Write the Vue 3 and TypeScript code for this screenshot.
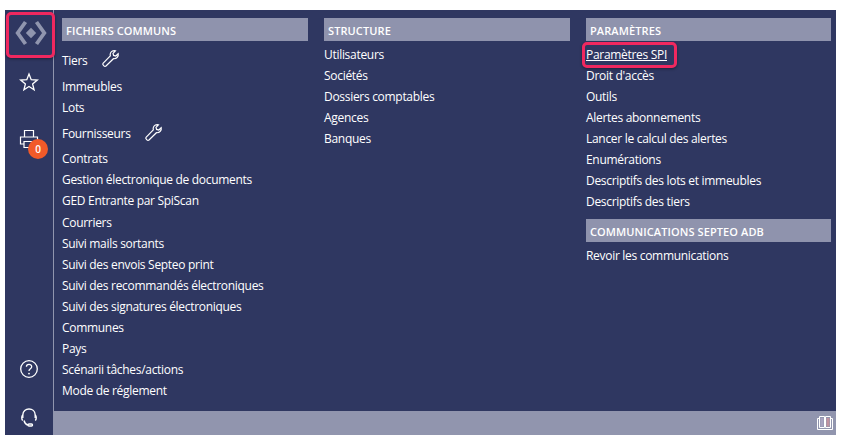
<script setup lang="ts">
interface Item { label: string; tool?: boolean; boxed?: boolean }
interface Section { title: string; items: Item[] }
const col1: Section[] = [{ title: 'FICHIERS COMMUNS', items: [
  { label: 'Tiers', tool: true }, { label: 'Immeubles' }, { label: 'Lots' }, { label: 'Fournisseurs', tool: true },
  { label: 'Contrats' }, { label: 'Gestion électronique de documents' }, { label: 'GED Entrante par SpiScan' },
  { label: 'Courriers' }, { label: 'Suivi mails sortants' }, { label: 'Suivi des envois Septeo print' },
  { label: 'Suivi des recommandés électroniques' }, { label: 'Suivi des signatures électroniques' },
  { label: 'Communes' }, { label: 'Pays' }, { label: 'Scénarii tâches/actions' }, { label: 'Mode de réglement' }
] }]
const col2: Section[] = [{ title: 'STRUCTURE', items: [
  { label: 'Utilisateurs' }, { label: 'Sociétés' }, { label: 'Dossiers comptables' }, { label: 'Agences' }, { label: 'Banques' }
] }]
const col3: Section[] = [
  { title: 'PARAMÈTRES', items: [
    { label: 'Paramètres SPI', boxed: true }, { label: "Droit d'accès" }, { label: 'Outils' }, { label: 'Alertes abonnements' },
    { label: 'Lancer le calcul des alertes' }, { label: 'Enumérations' }, { label: 'Descriptifs des lots et immeubles' }, { label: 'Descriptifs des tiers' }
  ] },
  { title: 'COMMUNICATIONS SEPTEO ADB', items: [{ label: 'Revoir les communications' }] }
]
const columns = [col1, col2, col3]
</script>

<template>
  <div class="page">
    <div class="app">
      <aside class="rail">
        <div class="logo">
          <svg width="32" height="32" viewBox="0 0 32 32" fill="none">
            <path d="M10.5 5 L2.7 16 L10.5 27 M21.5 5 L29.3 16 L21.5 27" stroke="#9095ae" stroke-width="3.8" />
            <path d="M16 10.8 L21.2 16 L16 21.2 L10.8 16 Z" fill="#9095ae" />
          </svg>
        </div>
        <div class="star">
          <svg width="20" height="20" viewBox="0 0 20 20" fill="none" stroke="#fff" stroke-width="1.3">
            <path d="M10 2 L12.2 7.7 L18.3 8 L13.6 11.9 L15.1 17.8 L10 14.5 L4.9 17.8 L6.4 11.9 L1.7 8 L7.8 7.7 Z" />
          </svg>
        </div>
        <div class="printer">
          <svg width="20" height="20" viewBox="0 0 20 20" fill="none" stroke="#fff" stroke-width="1.2">
            <path d="M5.5 8 V1.5 H14.5 V8 M5.5 15 H1.5 V8 H18.5 V15 H15 M5 12.5 H13 V18.5 H5 Z" />
          </svg>
          <span class="badge">0</span>
        </div>
        <div class="spacer"></div>
        <div class="help">
          <svg width="20" height="20" viewBox="0 0 20 20" fill="none" stroke="#fff" stroke-width="1.3">
            <circle cx="10" cy="10" r="8.3" />
            <path d="M7.4 7.8 C7.4 4.6 12.7 4.6 12.7 7.8 C12.7 9.8 10 9.8 10 12" />
            <circle cx="10" cy="14.6" r=".9" fill="#fff" stroke="none" />
          </svg>
        </div>
        <div class="headset">
          <svg width="20" height="22" viewBox="0 0 20 22" fill="none" stroke="#fff" stroke-width="1.4">
            <path d="M3.8 12 V9 C3.8 1 16.2 1 16.2 9 V12" />
            <path d="M3.8 9 C2.4 10 2.4 13.5 3.8 14.5 M16.2 9 C17.6 10 17.6 13.5 16.2 14.5" />
            <path d="M5 14.5 C5.5 17 7 18.5 9 19" />
            <rect x="9" y="18" width="4.5" height="2" rx="1" />
          </svg>
        </div>
      </aside>
      <div class="main">
        <div class="cols">
          <div v-for="(col, i) in columns" :key="i" class="col">
            <section v-for="sec in col" :key="sec.title" class="sec">
              <h2 class="head">{{ sec.title }}</h2>
              <ul class="list">
                <li v-for="it in sec.items" :key="it.label" class="row" :class="{ tall: it.tool }">
                  <span :class="{ link: it.boxed }">{{ it.label }}</span>
                  <svg v-if="it.tool" class="wrench" width="19" height="19" viewBox="0 0 19 19" fill="none" stroke="#fff" stroke-width="1.2">
                    <path d="M2 14.3 L9.3 6.8 C8.6 4.3 10.3 1.6 13.3 1.6 L14.4 1.8 L12 4.4 L12.6 6.4 L14.8 7 L17.2 4.7 C17.8 7.6 15.6 10 12.4 9.7 L5 17 C3.6 18 1.1 15.9 2 14.3 Z" />
                  </svg>
                  <span v-if="it.boxed" class="box"></span>
                </li>
              </ul>
            </section>
          </div>
        </div>
        <footer class="foot">
          <svg width="16" height="14" viewBox="0 0 16 14" fill="none" stroke="#fff" stroke-width="1">
            <path d="M2.5 .5 H7.5 V11.5 H2.5 Z M8.5 .5 H13.5 V11.5 H8.5 Z M2.5 2.5 H.5 V13.5 H15.5 V2.5 H13.5" />
            <path d="M3.5 2 H6.5 V10.5 H3.5 Z" fill="#a8a3c0" stroke="none" />
            <path d="M9.5 2 H12.5 V10.5 H9.5 Z" fill="#c0929f" stroke="none" />
          </svg>
        </footer>
      </div>
      <div class="frame"></div>
    </div>
  </div>
</template>

<style>
html, body { margin: 0; background: #fff; }
</style>

<style scoped>
.page {
  width: 863px;
  height: 437px;
  padding: 10px 0 0 5px;
  box-sizing: border-box;
  overflow: hidden;
  font-family: "Open Sans", "Noto Sans", sans-serif;
}
.app {
  position: relative;
  display: flex;
  width: 831px;
  height: 425px;
  background: #2f3761;
}
.rail {
  width: 48px;
  flex: none;
  display: flex;
  flex-direction: column;
  align-items: center;
  border-right: 1px solid #9095ae;
}
.logo { height: 46px; margin-left: 3px; display: flex; align-items: center; justify-content: center; }
.star { margin-top: 16px; height: 20px; }
.printer { position: relative; margin-top: 37px; height: 20px; }
.badge {
  position: absolute;
  left: 9px;
  top: 10px;
  width: 20px;
  height: 20px;
  border-radius: 50%;
  background: #f15a29;
  color: #fff;
  font-size: 10px;
  font-weight: 600;
  line-height: 20px;
  text-align: center;
}
.spacer { flex: 1; }
.help { height: 20px; margin-bottom: 27px; }
.headset { height: 22px; margin-bottom: 7px; }
.main { flex: 1; display: flex; flex-direction: column; min-width: 0; }
.cols {
  flex: 1;
  display: grid;
  grid-template-columns: 246px 246px 245px;
  column-gap: 16px;
  padding: 8px 0 0 8px;
}
.sec + .sec { margin-top: 7px; }
.head {
  margin: 0;
  height: 23px;
  padding-left: 4px;
  background: #8f93ad;
  color: #fff;
  font-size: 11px;
  font-weight: 600;
  line-height: 26px;
  letter-spacing: 0.1px;
  white-space: nowrap;
}
.list { list-style: none; margin: 3px 0 0; padding: 0; }
.row {
  position: relative;
  display: flex;
  align-items: center;
  height: 21px;
  color: #fff;
  font-size: 12px;
  letter-spacing: -0.3px;
  white-space: nowrap;
}
.col:first-child .row { height: 21.12px; }
.col:first-child .row.tall { height: 29px; margin-top: 1px; }
.col:first-child .row.tall:first-child { height: 32px; }
.wrench { margin-left: 13px; margin-top: -3px; }
.link { text-decoration: underline; }
.box {
  position: absolute;
  left: -4px;
  top: -2px;
  width: 89px;
  height: 20px;
  border: 3px solid #f0285f;
  border-radius: 5px;
  box-shadow: 0 1px 3px rgba(0, 0, 0, .4);
}
.foot {
  height: 24px;
  flex: none;
  background: #9195ae;
  display: flex;
  align-items: center;
  justify-content: flex-end;
  padding-right: 3px;
}
.frame {
  position: absolute;
  left: 1px;
  top: 2px;
  width: 43px;
  height: 40px;
  border: 3px solid #f0285f;
  border-radius: 5px;
  box-shadow: 0 1px 3px rgba(0, 0, 0, .4);
}
</style>
